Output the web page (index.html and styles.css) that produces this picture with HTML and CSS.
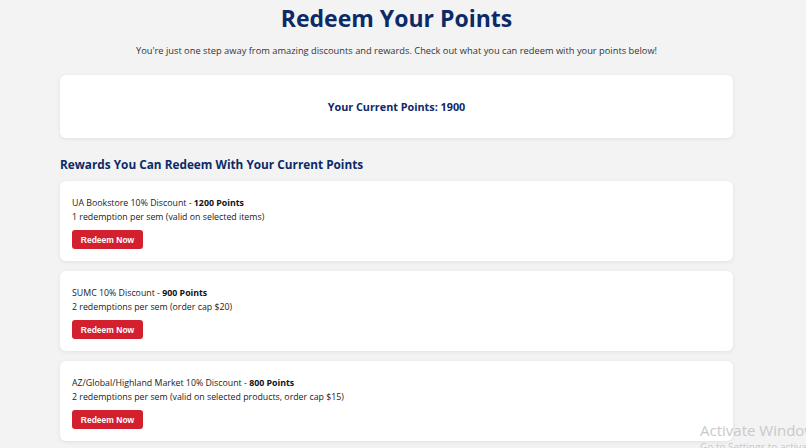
FILE: index.html
```html
<!DOCTYPE html>
<html lang="en">
<head>
<meta charset="utf-8">
<title>Redeem Your Points</title>
<link rel="stylesheet" href="styles.css">
</head>
<body>
<main class="page">
  <h1 class="title">Redeem Your Points</h1>
  <p class="subtitle">You're just one step away from amazing discounts and rewards. Check out what you can redeem with your points below!</p>
  <section class="points-card">
    <h2 class="points">Your Current Points: 1900</h2>
  </section>
  <h3 class="section-title">Rewards You Can Redeem With Your Current Points</h3>
  <div class="rewards">
    <div class="reward">
      <p class="reward-name">UA Bookstore 10% Discount - <strong>1200 Points</strong></p>
      <p class="reward-desc">1 redemption per sem (valid on selected items)</p>
      <button class="btn">Redeem Now</button>
    </div>
    <div class="reward">
      <p class="reward-name">SUMC 10% Discount - <strong>900 Points</strong></p>
      <p class="reward-desc">2 redemptions per sem (order cap $20)</p>
      <button class="btn">Redeem Now</button>
    </div>
    <div class="reward">
      <p class="reward-name">AZ/Global/Highland Market 10% Discount - <strong>800 Points</strong></p>
      <p class="reward-desc">2 redemptions per sem (valid on selected products, order cap $15)</p>
      <button class="btn">Redeem Now</button>
    </div>
  </div>
</main>
<div class="watermark">
  <div class="wm-1">Activate Windows</div>
  <div class="wm-2">Go to Settings to activate Windows.</div>
</div>
</body>
</html>
```

FILE: styles.css
```css
html, body {
  margin: 0;
  padding: 0;
}
body {
  background: #f3f3f3;
  font-family: "Open Sans", "Noto Sans", sans-serif;
  color: #222;
  width: 806px;
  height: 448px;
  overflow: hidden;
  position: relative;
}
.page {
  width: 673px;
  margin: 0 0 0 60px;
  display: flex;
  flex-direction: column;
}
.title {
  margin: 3px 0 0;
  text-align: center;
  font-size: 23px;
  line-height: 30px;
  font-weight: 700;
  color: #0c2a66;
}
.subtitle {
  margin: 11px 0 0;
  text-align: center;
  font-size: 9.3px;
  line-height: 14px;
  color: #333;
}
.points-card {
  margin-top: 17px;
  height: 63px;
  background: #fff;
  border-radius: 6px;
  box-shadow: 0 1px 4px rgba(0,0,0,0.08);
  display: flex;
  align-items: center;
  justify-content: center;
}
.points {
  margin: 0;
  font-size: 10.8px;
  font-weight: 700;
  color: #0c2a66;
}
.section-title {
  margin: 18px 0 0;
  font-size: 11.8px;
  line-height: 16px;
  font-weight: 700;
  color: #0c2a66;
}
.rewards {
  margin-top: 9px;
  display: flex;
  flex-direction: column;
  gap: 10px;
}
.reward {
  height: 80px;
  box-sizing: border-box;
  background: #fff;
  border-radius: 6px;
  box-shadow: 0 1px 4px rgba(0,0,0,0.08);
  padding: 15px 12px 0;
  display: flex;
  flex-direction: column;
  align-items: flex-start;
}
.reward-name, .reward-desc {
  margin: 0;
  font-size: 8.8px;
  line-height: 14px;
  color: #222;
}
.reward-name strong {
  color: #111;
}
.btn {
  margin-top: 6px;
  width: 71px;
  height: 19px;
  border: 0;
  border-radius: 3px;
  background: #d3202f;
  color: #fff;
  font-family: "Liberation Sans", Arial, sans-serif;
  font-weight: 700;
  font-size: 8.5px;
  padding: 0;
}
.watermark {
  position: absolute;
  left: 700px;
  top: 420px;
  color: #c9c9c9;
  white-space: nowrap;
  font-family: "Open Sans", sans-serif;
}
.wm-1 {
  font-size: 15px;
  line-height: 20px;
}
.wm-2 {
  font-size: 10px;
  line-height: 14px;
}
```
